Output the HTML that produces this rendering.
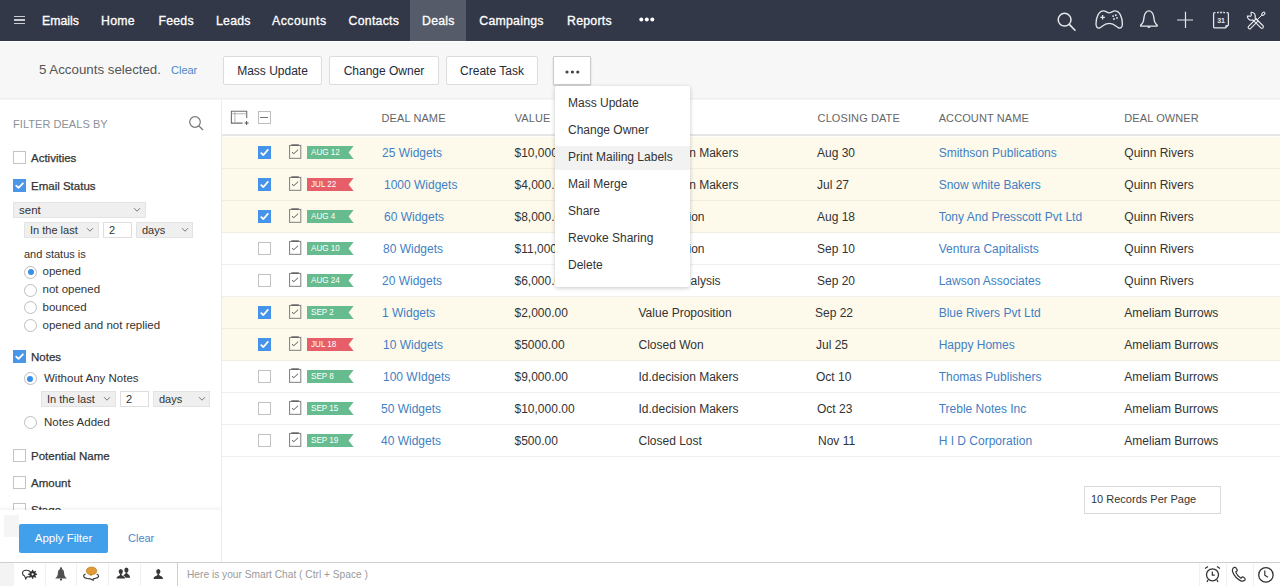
<!DOCTYPE html>
<html><head><meta charset="utf-8">
<style>
*{box-sizing:border-box;margin:0;padding:0}
html,body{width:1280px;height:586px;overflow:hidden;background:#f7f7f7;font-family:"Liberation Sans",sans-serif;position:relative}
.abs{position:absolute}
/* nav */
#nav{position:absolute;left:0;top:0;width:1280px;height:41px;background:#323848}
#navline{position:absolute;left:0;top:41px;width:1280px;height:1px;background:#fff}
.ni{position:absolute;top:12.8px;font-size:12.3px;letter-spacing:0.25px;color:#fff;line-height:16px;white-space:nowrap;-webkit-text-stroke:0.3px #fff}
#dealsbg{position:absolute;left:410px;top:0;width:56px;height:41px;background:#555b68}
.ham{position:absolute;left:14px;width:11px;height:1.4px;background:#c9ccd2}
.ticon{position:absolute;top:0}
/* toolbar */
#selinfo{position:absolute;left:39px;top:62px;font-size:13.3px;color:#555;line-height:16px;white-space:nowrap}
#clr1{position:absolute;left:171px;top:64.3px;font-size:11px;color:#4a87c8;line-height:13px}
.btn{position:absolute;top:56px;height:29px;background:#fff;border:1px solid #dcdcdc;border-radius:2px;font-size:12px;color:#232a3a;line-height:27px;padding-top:1px;text-align:center;white-space:nowrap}
/* left panel */
#lp{position:absolute;left:0;top:100px;width:221px;height:462px;background:#fff}
#lpborder{position:absolute;left:221px;top:100px;width:1px;height:462px;background:#ededed}
.lt{position:absolute;font-size:11.5px;color:#333;line-height:14px;white-space:nowrap}
.lb{position:absolute;font-size:11.5px;color:#333;line-height:14px;white-space:nowrap;-webkit-text-stroke:0.25px #333}
.lcb{position:absolute;left:13px;width:13px;height:13px;border:1px solid #c4c4c4;background:#fff}
.lcb.on{background:#4a96e8;border-color:#4a96e8}
.rad{position:absolute;width:13px;height:13px;border:1px solid #bdbdbd;border-radius:50%;background:#fff}
.rad.on::after{content:"";position:absolute;left:2.5px;top:2.5px;width:6px;height:6px;border-radius:50%;background:#3b8ee6}
.sel{position:absolute;height:16px;background:#efefef;border:1px solid #e3e3e3;font-size:11px;color:#333;line-height:14px;white-space:nowrap}
.inp{position:absolute;height:16px;background:#fff;border:1px solid #dedede;font-size:11px;color:#333;line-height:14px}
.chev{position:absolute;top:4px}
/* table */
#tbl{position:absolute;left:222px;top:100px;width:1058px;height:462px;background:#fff}
#hdrline{position:absolute;left:222px;top:134px;width:1058px;height:2px;background:#e6e6e6}
.hd{position:absolute;top:112px;font-size:11px;color:#666;line-height:13px;white-space:nowrap;letter-spacing:0.1px}
.row{position:absolute;left:222px;width:1058px;height:32px;background:#fff;border-bottom:1px solid #efefef}
.row.rsel{background:#fdfaec;border-bottom-color:#f1eee0}
.row .c{position:absolute;top:9px;font-size:12px;color:#333;line-height:14px;white-space:nowrap}
.row .c.lnk{color:#3f7fc4}
.row .c{margin-left:-222px}
.cb{position:absolute;left:36px;top:9px;width:13px;height:13px;border:1px solid #c2c2c2;background:#fff}
.cb.on{background:#4594ea;border:none}
.cb svg{position:absolute;left:0;top:0}
.task{position:absolute;left:67px;top:7px}
.flag{position:absolute;left:85px;top:9px;width:47px;height:13px}
.flag svg{position:absolute;left:0;top:0}
.flag.g polygon{fill:#66bb8f}
.flag.r polygon{fill:#e65f68}
.flag span{position:absolute;left:4.3px;top:1.3px;font-size:9px;line-height:10px;color:#fff;white-space:nowrap;letter-spacing:0px;transform:scaleX(0.9);transform-origin:0 0}
/* menu */
#menu{position:absolute;left:555px;top:86px;width:135px;height:201px;background:#fff;box-shadow:0 1px 4px rgba(0,0,0,0.22);border-radius:2px}
.mi{position:absolute;left:0;width:135px;height:27px;font-size:12px;color:#333;line-height:27px;padding-left:13px;white-space:nowrap}
.mi.hl{background:#f2f2f2}
/* records */
#rpp{position:absolute;left:1084px;top:486px;width:137px;height:28px;border:1px solid #dadada;background:#fff;font-size:11px;color:#333;line-height:25px;padding-left:6px;white-space:nowrap}
/* bottom bar */
#bb{position:absolute;left:0;top:562px;width:1280px;height:24px;background:#fff;border-top:1px solid #cfcfcf}
.bsep{position:absolute;top:563px;width:1px;height:23px;background:#f1f1f1}
#chat{position:absolute;left:187px;top:568px;font-size:10.2px;color:#9a9a9a;line-height:13px;white-space:nowrap}
</style></head>
<body>
<div id="nav"></div>
<div id="dealsbg"></div>
<div id="navline"></div>
<div class="ham" style="top:15.5px"></div>
<div class="ham" style="top:19.3px"></div>
<div class="ham" style="top:23px"></div>
<span class="ni" style="left:42px;top:13.2px;letter-spacing:0">Emails</span>
<span class="ni" style="left:101px">Home</span>
<span class="ni" style="left:158.4px">Feeds</span>
<span class="ni" style="left:216px">Leads</span>
<span class="ni" style="left:272px;letter-spacing:0.5px">Accounts</span>
<span class="ni" style="left:348.6px">Contacts</span>
<span class="ni" style="left:422px">Deals</span>
<span class="ni" style="left:479.3px">Campaings</span>
<span class="ni" style="left:567px">Reports</span>
<svg class="abs" style="left:639px;top:17px" width="16" height="5" viewBox="0 0 16 5"><circle cx="2.3" cy="2.5" r="2" fill="#fff"/><circle cx="7.8" cy="2.5" r="2" fill="#fff"/><circle cx="13.3" cy="2.5" r="2" fill="#fff"/></svg>

<!-- top right icons -->
<svg class="abs" style="left:1056px;top:11px" width="22" height="22" viewBox="0 0 22 22"><circle cx="8.6" cy="8.7" r="6.4" fill="none" stroke="#e8e9ec" stroke-width="1.5"/><path d="M13.3 13.4 L19 19.2" stroke="#e8e9ec" stroke-width="1.6" stroke-linecap="round"/></svg>
<svg class="abs" style="left:1094px;top:9px" width="31" height="21" viewBox="0 0 31 21"><path d="M9.5 1.9 C12 1.9 13 3.9 15.2 3.9 C17.4 3.9 18.5 1.9 21 1.9 C25.5 1.9 28.4 8 28.4 15 C28.4 18.5 26.5 19.6 25 19 C22.5 18 20.5 14.4 15.2 14.4 C9.9 14.4 7.9 18 5.4 19 C3.9 19.6 2 18.5 2 15 C2 8 4.9 1.9 9.5 1.9 Z" fill="none" stroke="#e4e6ea" stroke-width="1.35"/><path d="M8.6 6 V10.6 M6.3 8.3 H10.9" stroke="#e4e6ea" stroke-width="1.3"/><circle cx="19.1" cy="7.1" r="0.95" fill="#e4e6ea"/><circle cx="21.8" cy="6.25" r="0.95" fill="#e4e6ea"/><circle cx="23" cy="8.9" r="0.95" fill="#e4e6ea"/><circle cx="20" cy="10.06" r="0.95" fill="#e4e6ea"/></svg>
<svg class="abs" style="left:1139px;top:9px" width="20" height="21" viewBox="0 0 20 21"><path d="M9.9 1.9 C7.6 1.9 5.4 4.5 5.1 7.8 L4.4 12.2 C4.1 14 2.6 15 1.7 16.2 C1.3 16.8 1.6 17.1 2.2 17.1 H17.6 C18.2 17.1 18.5 16.8 18.1 16.2 C17.2 15 15.7 14 15.4 12.2 L14.7 7.8 C14.4 4.5 12.2 1.9 9.9 1.9 Z" fill="none" stroke="#e4e6ea" stroke-width="1.35" stroke-linejoin="round"/><path d="M8.3 17.4 A1.6 1.6 0 0 0 11.5 17.4 Z" fill="#e4e6ea"/></svg>
<svg class="abs" style="left:1176px;top:11px" width="18" height="18" viewBox="0 0 18 18"><path d="M9.5 0.8 V17 M1.1 9 H17" stroke="#e4e6ea" stroke-width="1.2"/></svg>
<svg class="abs" style="left:1211px;top:10px" width="20" height="21" viewBox="0 0 20 21"><path d="M4.5 2.6 H3.6 C2.9 2.6 2.6 2.9 2.6 3.6 V16.9 C2.6 17.6 2.9 17.9 3.6 17.9 H14.5 L17.4 15 V3.6 C17.4 2.9 17.1 2.6 16.4 2.6 H15.5" fill="none" stroke="#e4e6ea" stroke-width="1.25"/><path d="M6 2.6 H7.3 M9.3 2.6 H10.7 M12.7 2.6 H14" stroke="#e4e6ea" stroke-width="1.25"/><path d="M7.3 1.5 V3.2 M9.3 1.5 V3.2 M10.7 1.5 V3.2 M12.7 1.5 V3.2" stroke="#e4e6ea" stroke-width="0.7"/><path d="M14.3 18 V15.2 H17.5 Z" fill="#e4e6ea"/><text x="9.9" y="12.6" text-anchor="middle" font-family="Liberation Sans" font-size="7" font-weight="bold" fill="#e4e6ea" letter-spacing="-0.3">31</text></svg>
<svg class="abs" style="left:1245px;top:9px" width="22" height="22" viewBox="0 0 22 22"><path d="M9.98 8.76 L17.98 16.76 A1.5 1.5 0 0 1 15.86 18.88 L7.86 10.88 A4 4 0 0 1 2.31 6.99 L4.6 7.11 A1.2 1.2 0 0 0 6.21 5.5 L6.09 3.21 A4 4 0 0 1 9.98 8.76 Z" fill="none" stroke="#e4e6ea" stroke-width="1.15" stroke-linejoin="round"/><path d="M13.26 11.86 L5.66 19.46 A1.5 1.5 0 0 1 3.54 17.34 L11.14 9.74 Z" fill="none" stroke="#e4e6ea" stroke-width="1.15" stroke-linejoin="round"/><path d="M12.2 10.8 L16.9 6.1" stroke="#e4e6ea" stroke-width="1"/><ellipse cx="18.3" cy="4.7" rx="2" ry="1.2" transform="rotate(-45 18.3 4.7)" fill="none" stroke="#e4e6ea" stroke-width="1.1"/></svg>

<!-- toolbar -->
<span id="selinfo">5 Accounts selected.</span>
<span id="clr1">Clear</span>
<div class="btn" style="left:223px;width:99px">Mass Update</div>
<div class="btn" style="left:329px;width:110px">Change Owner</div>
<div class="btn" style="left:446px;width:92px">Create Task</div>
<div class="btn" style="left:553px;width:38px;border-color:#cdcdcd;border-radius:1px;box-shadow:0 1px 2px rgba(0,0,0,0.18)"><svg style="position:absolute;left:11px;top:12.8px" width="16" height="4" viewBox="0 0 16 4"><circle cx="2" cy="2" r="1.6" fill="#444"/><circle cx="7.4" cy="2" r="1.6" fill="#444"/><circle cx="12.8" cy="2" r="1.6" fill="#444"/></svg></div>

<!-- left panel -->
<div class="abs" style="left:0;top:98px;width:1280px;height:1px;background:#efefef"></div>
<div id="lp"></div>
<div id="lpborder"></div>
<span class="lt" style="left:13px;top:116.6px;font-size:11px;color:#8c9099;letter-spacing:0.05px">FILTER DEALS BY</span>
<svg class="abs" style="left:188px;top:115px" width="17" height="17" viewBox="0 0 17 17"><circle cx="7" cy="7" r="5.3" fill="none" stroke="#777" stroke-width="1.2"/><path d="M11 11 L15 15" stroke="#777" stroke-width="1.3"/></svg>

<div class="lcb" style="top:151px"></div>
<span class="lb" style="left:31px;top:151px">Activities</span>
<div class="lcb on" style="top:178.5px"><svg style="position:absolute;left:-1px;top:-1px" width="13" height="13" viewBox="0 0 13 13"><path d="M3.2 6.6 L5.5 8.9 L9.9 4.3" stroke="#fff" stroke-width="1.8" fill="none" stroke-linecap="round" stroke-linejoin="round"/></svg></div>
<span class="lb" style="left:31px;top:178.5px">Email Status</span>

<div class="sel" style="left:13px;top:202px;width:133px;font-size:11.5px;padding-left:5px">sent<svg class="chev" style="left:119px" width="8" height="6" viewBox="0 0 8 6"><path d="M1 1.2 L4 4.2 L7 1.2" fill="none" stroke="#777" stroke-width="1"/></svg></div>
<div class="sel" style="left:24px;top:222px;width:75px;padding-left:5px">In the last<svg class="chev" style="left:61px" width="8" height="6" viewBox="0 0 8 6"><path d="M1 1.2 L4 4.2 L7 1.2" fill="none" stroke="#777" stroke-width="1"/></svg></div>
<div class="inp" style="left:103px;top:222px;width:29px;padding-left:5px">2</div>
<div class="sel" style="left:136px;top:222px;width:57px;padding-left:5px">days<svg class="chev" style="left:44px" width="8" height="6" viewBox="0 0 8 6"><path d="M1 1.2 L4 4.2 L7 1.2" fill="none" stroke="#777" stroke-width="1"/></svg></div>

<span class="lt" style="left:24px;top:247px;font-size:11px">and status is</span>
<div class="rad on" style="left:24px;top:265.5px"></div><span class="lt" style="left:42.5px;top:264px">opened</span>
<div class="rad" style="left:24px;top:283.5px"></div><span class="lt" style="left:42.5px;top:282px">not opened</span>
<div class="rad" style="left:24px;top:301px"></div><span class="lt" style="left:42.5px;top:300px">bounced</span>
<div class="rad" style="left:24px;top:318.5px"></div><span class="lt" style="left:42.5px;top:317.5px">opened and not replied</span>

<div class="lcb on" style="top:349.5px"><svg style="position:absolute;left:-1px;top:-1px" width="13" height="13" viewBox="0 0 13 13"><path d="M3.2 6.6 L5.5 8.9 L9.9 4.3" stroke="#fff" stroke-width="1.8" fill="none" stroke-linecap="round" stroke-linejoin="round"/></svg></div>
<span class="lb" style="left:31px;top:350px">Notes</span>
<div class="rad on" style="left:23.5px;top:372px"></div><span class="lt" style="left:44px;top:371px">Without Any Notes</span>
<div class="sel" style="left:41px;top:391px;width:75px;padding-left:5px">In the last<svg class="chev" style="left:61px" width="8" height="6" viewBox="0 0 8 6"><path d="M1 1.2 L4 4.2 L7 1.2" fill="none" stroke="#777" stroke-width="1"/></svg></div>
<div class="inp" style="left:120px;top:391px;width:29px;padding-left:5px">2</div>
<div class="sel" style="left:153px;top:391px;width:57px;padding-left:5px">days<svg class="chev" style="left:44px" width="8" height="6" viewBox="0 0 8 6"><path d="M1 1.2 L4 4.2 L7 1.2" fill="none" stroke="#777" stroke-width="1"/></svg></div>
<div class="rad" style="left:23.5px;top:415.5px"></div><span class="lt" style="left:44px;top:414.5px">Notes Added</span>

<div class="lcb" style="top:449px"></div>
<span class="lb" style="left:31px;top:449px">Potential Name</span>
<div class="lcb" style="top:476px"></div>
<span class="lb" style="left:31px;top:476px">Amount</span>
<div class="lcb" style="top:503px"></div>
<span class="lb" style="left:31px;top:503px">Stage</span>

<!-- left footer -->
<div class="abs" style="left:0;top:510px;width:221px;height:52px;background:#fff;box-shadow:0 -2px 3px rgba(0,0,0,0.05)"></div>
<div class="abs" style="left:4px;top:515px;width:15px;height:22px;background:#f5f5f5"></div>
<div class="abs" style="left:19px;top:524px;width:89px;height:29px;background:#42a0ea;border-radius:2px;color:#fff;font-size:11.5px;line-height:29px;text-align:center">Apply Filter</div>
<span class="abs" style="left:128px;top:531.5px;font-size:11px;color:#4a87c8;line-height:13px">Clear</span>

<!-- table -->
<div id="tbl"></div>
<svg class="abs" style="left:230px;top:110px" width="20" height="16" viewBox="0 0 20 16"><path d="M16.7 8 V1.3 H1.4 V13.1 H12.5" fill="none" stroke="#6e6e6e" stroke-width="1.1"/><path d="M1.4 3.8 H16.7 M4.9 1.3 V13.1" stroke="#aaa" stroke-width="0.9"/><path d="M16.6 11 V15 M14.6 13 H18.6" stroke="#555" stroke-width="1"/></svg>
<div class="abs" style="left:258px;top:111px;width:13px;height:13px;border:1px solid #bdbdbd;background:#fff"><div style="position:absolute;left:1.4px;top:5.3px;width:8px;height:1px;background:#777"></div></div>
<span class="hd" style="left:381.5px">DEAL NAME</span>
<span class="hd" style="left:514.7px">VALUE</span>
<span class="hd" style="left:638.5px">STAGE</span>
<span class="hd" style="left:817.6px">CLOSING DATE</span>
<span class="hd" style="left:938.7px">ACCOUNT NAME</span>
<span class="hd" style="left:1124.3px">DEAL OWNER</span>
<div id="hdrline"></div>
<div class="row rsel" style="top:137px">
<div class="cb on"><svg width="13" height="13" viewBox="0 0 13 13"><path d="M2.7 6.6 L5.4 9.0 L10.3 3.3" stroke="#fff" stroke-width="1.8" fill="none" stroke-linecap="butt" stroke-linejoin="round"/></svg></div>
<svg class="task" width="13" height="15" viewBox="0 0 13 15"><rect x="0.6" y="1.4" width="11.2" height="12.9" fill="none" stroke="#777" stroke-width="0.95"/><rect x="2.4" y="0.3" width="7.4" height="1.7" fill="#666"/><path d="M3 8.2 L4.8 9.7 L9.1 5.7" fill="none" stroke="#555" stroke-width="1"/></svg>
<div class="flag g"><svg width="47" height="13" viewBox="0 0 47 13"><polygon points="0,0 46.6,0 41.6,6.5 46.6,13 0,13"/></svg><span>AUG 12</span></div>
<span class="c lnk" style="left:382px">25 Widgets</span>
<span class="c" style="left:514.5px">$10,000.00</span>
<span class="c" style="left:638.5px">Id.decision Makers</span>
<span class="c" style="left:817px">Aug 30</span>
<span class="c lnk" style="left:938.7px">Smithson Publications</span>
<span class="c" style="left:1124.3px">Quinn Rivers</span>
</div>
<div class="row rsel" style="top:169px">
<div class="cb on"><svg width="13" height="13" viewBox="0 0 13 13"><path d="M2.7 6.6 L5.4 9.0 L10.3 3.3" stroke="#fff" stroke-width="1.8" fill="none" stroke-linecap="butt" stroke-linejoin="round"/></svg></div>
<svg class="task" width="13" height="15" viewBox="0 0 13 15"><rect x="0.6" y="1.4" width="11.2" height="12.9" fill="none" stroke="#777" stroke-width="0.95"/><rect x="2.4" y="0.3" width="7.4" height="1.7" fill="#666"/><path d="M3 8.2 L4.8 9.7 L9.1 5.7" fill="none" stroke="#555" stroke-width="1"/></svg>
<div class="flag r"><svg width="47" height="13" viewBox="0 0 47 13"><polygon points="0,0 46.6,0 41.6,6.5 46.6,13 0,13"/></svg><span>JUL 22</span></div>
<span class="c lnk" style="left:384px">1000 Widgets</span>
<span class="c" style="left:514.5px">$4,000.00</span>
<span class="c" style="left:638.5px">Id.decision Makers</span>
<span class="c" style="left:817px">Jul 27</span>
<span class="c lnk" style="left:938.7px">Snow white Bakers</span>
<span class="c" style="left:1124.3px">Quinn Rivers</span>
</div>
<div class="row rsel" style="top:201px">
<div class="cb on"><svg width="13" height="13" viewBox="0 0 13 13"><path d="M2.7 6.6 L5.4 9.0 L10.3 3.3" stroke="#fff" stroke-width="1.8" fill="none" stroke-linecap="butt" stroke-linejoin="round"/></svg></div>
<svg class="task" width="13" height="15" viewBox="0 0 13 15"><rect x="0.6" y="1.4" width="11.2" height="12.9" fill="none" stroke="#777" stroke-width="0.95"/><rect x="2.4" y="0.3" width="7.4" height="1.7" fill="#666"/><path d="M3 8.2 L4.8 9.7 L9.1 5.7" fill="none" stroke="#555" stroke-width="1"/></svg>
<div class="flag g"><svg width="47" height="13" viewBox="0 0 47 13"><polygon points="0,0 46.6,0 41.6,6.5 46.6,13 0,13"/></svg><span>AUG 4</span></div>
<span class="c lnk" style="left:384px">60 Widgets</span>
<span class="c" style="left:514.5px">$8,000.00</span>
<span class="c" style="left:638.5px">Qualification</span>
<span class="c" style="left:817px">Aug 18</span>
<span class="c lnk" style="left:938.7px">Tony And Presscott Pvt Ltd</span>
<span class="c" style="left:1124.3px">Quinn Rivers</span>
</div>
<div class="row" style="top:233px">
<div class="cb"></div>
<svg class="task" width="13" height="15" viewBox="0 0 13 15"><rect x="0.6" y="1.4" width="11.2" height="12.9" fill="none" stroke="#777" stroke-width="0.95"/><rect x="2.4" y="0.3" width="7.4" height="1.7" fill="#666"/><path d="M3 8.2 L4.8 9.7 L9.1 5.7" fill="none" stroke="#555" stroke-width="1"/></svg>
<div class="flag g"><svg width="47" height="13" viewBox="0 0 47 13"><polygon points="0,0 46.6,0 41.6,6.5 46.6,13 0,13"/></svg><span>AUG 10</span></div>
<span class="c lnk" style="left:383px">80 Widgets</span>
<span class="c" style="left:514.5px">$11,000.00</span>
<span class="c" style="left:638.5px">Qualification</span>
<span class="c" style="left:817px">Sep 10</span>
<span class="c lnk" style="left:938.7px">Ventura Capitalists</span>
<span class="c" style="left:1124.3px">Quinn Rivers</span>
</div>
<div class="row" style="top:265px">
<div class="cb"></div>
<svg class="task" width="13" height="15" viewBox="0 0 13 15"><rect x="0.6" y="1.4" width="11.2" height="12.9" fill="none" stroke="#777" stroke-width="0.95"/><rect x="2.4" y="0.3" width="7.4" height="1.7" fill="#666"/><path d="M3 8.2 L4.8 9.7 L9.1 5.7" fill="none" stroke="#555" stroke-width="1"/></svg>
<div class="flag g"><svg width="47" height="13" viewBox="0 0 47 13"><polygon points="0,0 46.6,0 41.6,6.5 46.6,13 0,13"/></svg><span>AUG 24</span></div>
<span class="c lnk" style="left:382px">20 Widgets</span>
<span class="c" style="left:514.5px">$6,000.00</span>
<span class="c" style="left:638.5px">Needs Analysis</span>
<span class="c" style="left:817px">Sep 20</span>
<span class="c lnk" style="left:938.7px">Lawson Associates</span>
<span class="c" style="left:1124.3px">Quinn Rivers</span>
</div>
<div class="row rsel" style="top:297px">
<div class="cb on"><svg width="13" height="13" viewBox="0 0 13 13"><path d="M2.7 6.6 L5.4 9.0 L10.3 3.3" stroke="#fff" stroke-width="1.8" fill="none" stroke-linecap="butt" stroke-linejoin="round"/></svg></div>
<svg class="task" width="13" height="15" viewBox="0 0 13 15"><rect x="0.6" y="1.4" width="11.2" height="12.9" fill="none" stroke="#777" stroke-width="0.95"/><rect x="2.4" y="0.3" width="7.4" height="1.7" fill="#666"/><path d="M3 8.2 L4.8 9.7 L9.1 5.7" fill="none" stroke="#555" stroke-width="1"/></svg>
<div class="flag g"><svg width="47" height="13" viewBox="0 0 47 13"><polygon points="0,0 46.6,0 41.6,6.5 46.6,13 0,13"/></svg><span>SEP 2</span></div>
<span class="c lnk" style="left:382px">1 Widgets</span>
<span class="c" style="left:514.5px">$2,000.00</span>
<span class="c" style="left:638.5px">Value Proposition</span>
<span class="c" style="left:815px">Sep 22</span>
<span class="c lnk" style="left:938.7px">Blue Rivers Pvt Ltd</span>
<span class="c" style="left:1124.3px">Ameliam Burrows</span>
</div>
<div class="row rsel" style="top:329px">
<div class="cb on"><svg width="13" height="13" viewBox="0 0 13 13"><path d="M2.7 6.6 L5.4 9.0 L10.3 3.3" stroke="#fff" stroke-width="1.8" fill="none" stroke-linecap="butt" stroke-linejoin="round"/></svg></div>
<svg class="task" width="13" height="15" viewBox="0 0 13 15"><rect x="0.6" y="1.4" width="11.2" height="12.9" fill="none" stroke="#777" stroke-width="0.95"/><rect x="2.4" y="0.3" width="7.4" height="1.7" fill="#666"/><path d="M3 8.2 L4.8 9.7 L9.1 5.7" fill="none" stroke="#555" stroke-width="1"/></svg>
<div class="flag r"><svg width="47" height="13" viewBox="0 0 47 13"><polygon points="0,0 46.6,0 41.6,6.5 46.6,13 0,13"/></svg><span>JUL 18</span></div>
<span class="c lnk" style="left:383px">10 Widgets</span>
<span class="c" style="left:514.5px">$5000.00</span>
<span class="c" style="left:638.5px">Closed Won</span>
<span class="c" style="left:816px">Jul 25</span>
<span class="c lnk" style="left:938.7px">Happy Homes</span>
<span class="c" style="left:1124.3px">Ameliam Burrows</span>
</div>
<div class="row" style="top:361px">
<div class="cb"></div>
<svg class="task" width="13" height="15" viewBox="0 0 13 15"><rect x="0.6" y="1.4" width="11.2" height="12.9" fill="none" stroke="#777" stroke-width="0.95"/><rect x="2.4" y="0.3" width="7.4" height="1.7" fill="#666"/><path d="M3 8.2 L4.8 9.7 L9.1 5.7" fill="none" stroke="#555" stroke-width="1"/></svg>
<div class="flag g"><svg width="47" height="13" viewBox="0 0 47 13"><polygon points="0,0 46.6,0 41.6,6.5 46.6,13 0,13"/></svg><span>SEP 8</span></div>
<span class="c lnk" style="left:383px">100 WIdgets</span>
<span class="c" style="left:514.5px">$9,000.00</span>
<span class="c" style="left:638.5px">Id.decision Makers</span>
<span class="c" style="left:816px">Oct 10</span>
<span class="c lnk" style="left:938.7px">Thomas Publishers</span>
<span class="c" style="left:1124.3px">Ameliam Burrows</span>
</div>
<div class="row" style="top:393px">
<div class="cb"></div>
<svg class="task" width="13" height="15" viewBox="0 0 13 15"><rect x="0.6" y="1.4" width="11.2" height="12.9" fill="none" stroke="#777" stroke-width="0.95"/><rect x="2.4" y="0.3" width="7.4" height="1.7" fill="#666"/><path d="M3 8.2 L4.8 9.7 L9.1 5.7" fill="none" stroke="#555" stroke-width="1"/></svg>
<div class="flag g"><svg width="47" height="13" viewBox="0 0 47 13"><polygon points="0,0 46.6,0 41.6,6.5 46.6,13 0,13"/></svg><span>SEP 15</span></div>
<span class="c lnk" style="left:381px">50 Widgets</span>
<span class="c" style="left:514.5px">$10,000.00</span>
<span class="c" style="left:638.5px">Id.decision Makers</span>
<span class="c" style="left:817px">Oct 23</span>
<span class="c lnk" style="left:938.7px">Treble Notes Inc</span>
<span class="c" style="left:1124.3px">Ameliam Burrows</span>
</div>
<div class="row" style="top:425px">
<div class="cb"></div>
<svg class="task" width="13" height="15" viewBox="0 0 13 15"><rect x="0.6" y="1.4" width="11.2" height="12.9" fill="none" stroke="#777" stroke-width="0.95"/><rect x="2.4" y="0.3" width="7.4" height="1.7" fill="#666"/><path d="M3 8.2 L4.8 9.7 L9.1 5.7" fill="none" stroke="#555" stroke-width="1"/></svg>
<div class="flag g"><svg width="47" height="13" viewBox="0 0 47 13"><polygon points="0,0 46.6,0 41.6,6.5 46.6,13 0,13"/></svg><span>SEP 19</span></div>
<span class="c lnk" style="left:381px">40 Widgets</span>
<span class="c" style="left:514.5px">$500.00</span>
<span class="c" style="left:638.5px">Closed Lost</span>
<span class="c" style="left:818px">Nov 11</span>
<span class="c lnk" style="left:938.7px">H I D Corporation</span>
<span class="c" style="left:1124.3px">Ameliam Burrows</span>
</div>

<!-- menu -->
<div id="menu">
<div class="abs" style="left:0;top:59.6px;width:135px;height:24.2px;background:#f2f2f2"></div>
<div class="mi" style="top:4px">Mass Update</div>
<div class="mi" style="top:31px">Change Owner</div>
<div class="mi" style="top:58px">Print Mailing Labels</div>
<div class="mi" style="top:85px">Mail Merge</div>
<div class="mi" style="top:112px">Share</div>
<div class="mi" style="top:139px">Revoke Sharing</div>
<div class="mi" style="top:166px">Delete</div>
</div>

<div id="rpp">10 Records Per Page</div>

<!-- bottom bar -->
<div id="bb"></div>
<div class="abs" style="left:0;top:563px;width:14px;height:23px;background:#f3f3f3"></div>
<div class="bsep" style="left:45px"></div>
<div class="bsep" style="left:76px"></div>
<div class="bsep" style="left:108px"></div>
<div class="bsep" style="left:140px"></div>
<div class="abs" style="left:177px;top:563px;width:1px;height:23px;background:#cfcfcf"></div>
<span id="chat">Here is your Smart Chat ( Ctrl + Space )</span>
<div class="bsep" style="left:1199px"></div>
<div class="bsep" style="left:1226px"></div>
<div class="bsep" style="left:1253px"></div>

<!-- bottom icons -->
<svg class="abs" style="left:21px;top:567px" width="18" height="14" viewBox="0 0 18 14"><path d="M8.6 4.2 C7.8 3.6 6.6 3.3 5.3 3.3 C3 3.3 1.5 4.6 1.5 6.3 C1.5 7.5 2.3 8.5 3.6 9.1 L4.8 12 L6 9.8 C6.9 9.9 7.8 9.8 8.6 9.4" fill="none" stroke="#333" stroke-width="1.1"/><g transform="translate(11.6 7.3)"><circle r="3.2" fill="#333"/><circle r="1.1" fill="#fff"/><g stroke="#333" stroke-width="1.3"><path d="M0 -4.5 V4.5"/><path d="M-4.5 0 H4.5"/><path d="M-3.2 -3.2 L3.2 3.2"/><path d="M-3.2 3.2 L3.2 -3.2"/></g><circle r="1.1" fill="#fff"/></g></svg>
<svg class="abs" style="left:54px;top:566px" width="14" height="16" viewBox="0 0 14 16"><circle cx="7" cy="2.3" r="1.1" fill="#444"/><path d="M7 3 C4.6 3 3.9 5 3.9 7 C3.9 9.3 3 10.8 1.2 12.6 H12.8 C11 10.8 10.1 9.3 10.1 7 C10.1 5 9.4 3 7 3 Z" fill="#505050"/><circle cx="7" cy="13.6" r="1.1" fill="#444"/></svg>
<svg class="abs" style="left:82px;top:565px" width="19" height="17" viewBox="0 0 19 17"><path d="M3.5 9 C2 9.6 1.6 10.4 1.6 11.1 C1.6 12.6 4 13.7 8.3 13.9 L11.2 15.2 L11.4 13.8 C14.8 13.4 16.6 12.4 16.6 11.1 C16.6 10.3 16 9.6 14.6 9" fill="none" stroke="#3a3a3a" stroke-width="1.2"/><ellipse cx="9.5" cy="5.9" rx="5.2" ry="3.9" fill="#e29a35" stroke="#b8791f" stroke-width="0.7"/><path d="M7.6 9.3 L8.7 11 L10.2 9.5 Z" fill="#a86e1c"/></svg>
<svg class="abs" style="left:115px;top:566px" width="17" height="14" viewBox="0 0 17 14"><path d="M10.60 6.20 L10.60 7.60 C9.80 8.60 7.70 8.80 7.70 11.70 H15.10 C15.10 8.80 13.00 8.60 12.20 7.60 L12.20 6.20 Z" fill="#383838"/><ellipse cx="11.4" cy="4.0" rx="2.1" ry="2.5" fill="#383838"/><path d="M5.00 7.60 L5.00 9.00 C4.20 10.00 1.50 10.20 1.50 12.60 H10.10 C10.10 10.20 7.40 10.00 6.60 9.00 L6.60 7.60 Z" fill="none" stroke="#fff" stroke-width="1.3"/><ellipse cx="5.8" cy="5.4" rx="2.1" ry="2.5" fill="none" stroke="#fff" stroke-width="1.3"/><path d="M5.00 7.60 L5.00 9.00 C4.20 10.00 1.50 10.20 1.50 12.60 H10.10 C10.10 10.20 7.40 10.00 6.60 9.00 L6.60 7.60 Z" fill="#383838"/><ellipse cx="5.8" cy="5.4" rx="2.1" ry="2.5" fill="#383838"/></svg>
<svg class="abs" style="left:152px;top:566px" width="12" height="14" viewBox="0 0 12 14"><path d="M5.50 7.60 L5.50 9.00 C4.70 10.00 1.60 10.20 1.60 12.90 H11.00 C11.00 10.20 7.90 10.00 7.10 9.00 L7.10 7.60 Z" fill="#383838"/><ellipse cx="6.3" cy="5.4" rx="2.1" ry="2.5" fill="#383838"/></svg>
<svg class="abs" style="left:1203px;top:565px" width="19" height="19" viewBox="0 0 19 19"><circle cx="9.5" cy="9.8" r="6" fill="none" stroke="#333" stroke-width="1.3"/><path d="M9.3 6.6 V10.1 H11.8" fill="none" stroke="#333" stroke-width="1.2"/><path d="M2 3.6 L5 1.4 M17 3.6 L14 1.4" stroke="#333" stroke-width="1.2"/><path d="M5 15 L4 17 M14 15 L15 17" stroke="#333" stroke-width="1.3"/></svg>
<svg class="abs" style="left:1231px;top:566px" width="15" height="16" viewBox="0 0 15 16"><path d="M2.4 1.9 C3.3 1 4.6 1.2 5.2 2.2 L6.1 3.6 C6.5 4.3 6.2 5 5.5 5.4 L4.6 5.9 C5.6 8.6 7.5 10.9 10 12.3 L10.6 11.5 C11.1 10.9 11.9 10.8 12.6 11.3 L13.6 12.1 C14.4 12.8 14.3 14 13.4 14.6 C12.4 15.3 11 15.4 9.5 14.6 C6.1 12.8 3.2 9.7 1.8 6.2 C1.2 4.6 1.4 2.9 2.4 1.9 Z" fill="none" stroke="#333" stroke-width="1.2" stroke-linejoin="round"/></svg>
<svg class="abs" style="left:1257px;top:566px" width="18" height="18" viewBox="0 0 18 18"><circle cx="8.9" cy="8.9" r="7.2" fill="none" stroke="#333" stroke-width="1.3"/><path d="M7.8 4.6 V9.2 L10.9 11.2" fill="none" stroke="#333" stroke-width="1.2"/></svg>
</body></html>
